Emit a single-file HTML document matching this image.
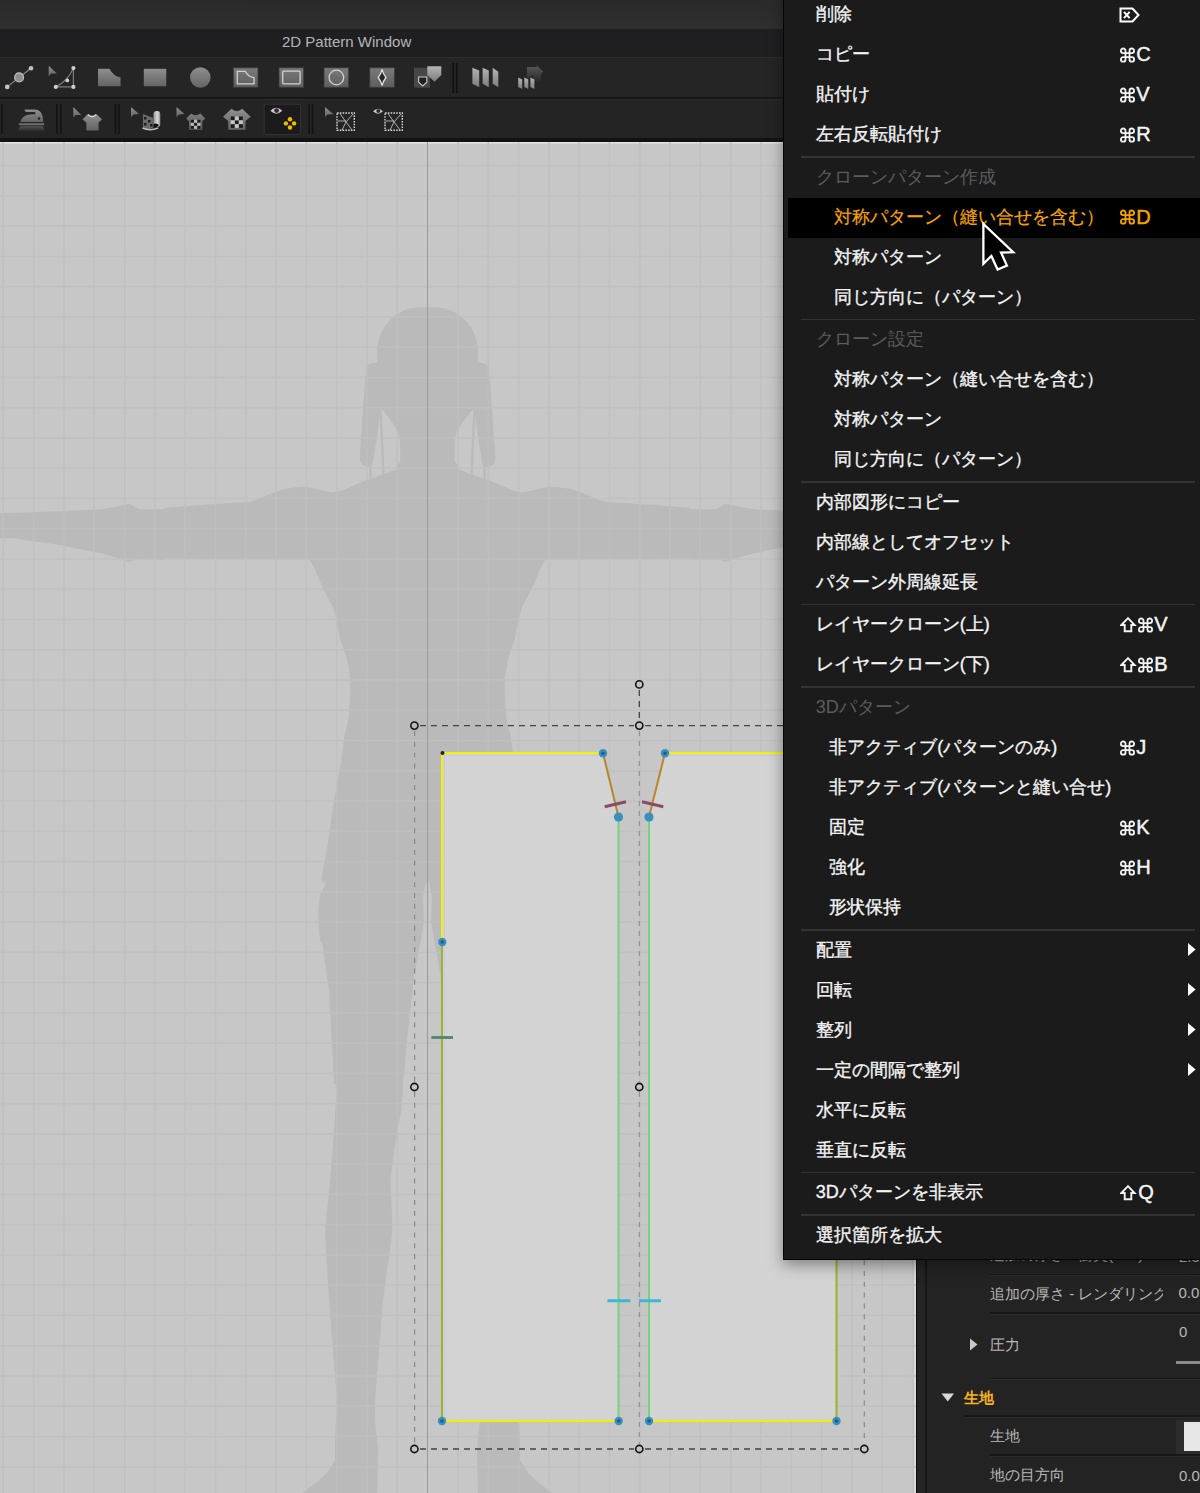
<!DOCTYPE html>
<html lang="ja"><head><meta charset="utf-8"><title>2D Pattern Window</title>
<style>
html,body{margin:0;padding:0;width:1200px;height:1493px;overflow:hidden;background:#c9c9c9;font-family:"Liberation Sans",sans-serif;}
.a{position:absolute}
#top{left:0;top:0;width:1200px;height:29px;background:linear-gradient(#2a2a2a,#2f2f2f)}
#title{left:0;top:29px;width:1200px;height:28px;background:#1f1f21;color:#b4b4b8;font-size:15px;line-height:28px;}
#title span{position:absolute;left:282px;top:-1px}
#tb1{left:0;top:57px;width:1200px;height:41px;background:#252525;border-top:1.5px solid #2e2e2e;box-sizing:border-box}
#tb1b{left:0;top:97px;width:1200px;height:1.5px;background:#171717}
#tb2{left:0;top:98.5px;width:1200px;height:40px;background:#242424;border-top:1.5px solid #2c2c2c;box-sizing:border-box}
#tb2b{left:0;top:138px;width:1200px;height:4px;background:#121212}
#canvas{left:0;top:142px;width:916px;height:1351px}
#strip{left:916px;top:142px;width:11px;height:1351px;background:#242424;border-left:1.5px solid #0c0c0c;border-right:2px solid #161616;box-sizing:border-box}
#panel{left:927px;top:142px;width:273px;height:1351px;background:#232323}
.pt{position:absolute;color:#b9b9b9;font-size:15px;line-height:20px;white-space:nowrap}
.psep{position:absolute;height:1.5px;background:#171717;border-bottom:1px solid #2b2b2b}
#menu{left:783px;top:-10px;width:420px;height:1268.8px;background:#1b1b1b;border-left:1px solid #050505;border-bottom:1px solid #050505;box-shadow:0 5px 14px rgba(0,0,0,0.38);}
#menuin{position:absolute;left:0;top:10px;width:100%;height:100%}
.mi,.mh{position:absolute;left:0;width:417px;height:40px;}
.mi .t,.mh .t{position:absolute;top:0;line-height:38px;font-size:18px;white-space:nowrap;color:#f4f4f4;-webkit-text-stroke:0.35px #f4f4f4}
.mh .t{-webkit-text-stroke:0}
.hl .t{-webkit-text-stroke:0.2px #f5a300}
.mh .t{color:#5c5c5c}
.hl{background:#000;left:4px;width:413px}
.hl .t{color:#f5a300;margin-left:-4px}
.sc{position:absolute;top:0;line-height:39px;font-size:20px;color:#f4f4f4;white-space:nowrap;-webkit-text-stroke:0.45px currentColor}
.sym{position:absolute;top:11.5px}
.delic{position:absolute;left:335px;top:12px}
.arr{position:absolute;left:404px;top:12px}
.sep{position:absolute;left:17.3px;width:394px;height:1.5px;background:#333333}
</style></head>
<body>
<div class="a" id="top"></div>
<div class="a" id="title"><span>2D Pattern Window</span></div>
<div class="a" id="tb1"></div>
<div class="a" id="tb1b"></div>
<div class="a" id="tb2"></div>
<div class="a" id="tb2b"></div>

<svg class="a" style="left:0;top:57px" width="783" height="85" viewBox="0 57 783 85">
 <defs>
  <linearGradient id="g1" x1="0" y1="0" x2="0" y2="1"><stop offset="0" stop-color="#8e8e8e"/><stop offset="1" stop-color="#646464"/></linearGradient>
  <linearGradient id="g2" x1="0" y1="0" x2="0" y2="1"><stop offset="0" stop-color="#7a7a7a"/><stop offset="1" stop-color="#5e5e5e"/></linearGradient>
  <linearGradient id="g3" x1="0" y1="0" x2="0" y2="1"><stop offset="0" stop-color="#b4b4b4"/><stop offset="1" stop-color="#7c7c7c"/></linearGradient>
  <linearGradient id="g4" x1="0" y1="0" x2="1" y2="0"><stop offset="0" stop-color="#9a9a9a"/><stop offset="0.6" stop-color="#d8d8d8"/><stop offset="1" stop-color="#8a8a8a"/></linearGradient>
  <linearGradient id="g5" x1="0" y1="0" x2="0" y2="1"><stop offset="0" stop-color="#5a5a5a"/><stop offset="1" stop-color="#242424"/></linearGradient>
 </defs>
 <!-- row1 -->
 <line x1="7.2" y1="86.9" x2="31" y2="68.3" stroke="#8a8a8a" stroke-width="1.2"/>
 <circle cx="7.2" cy="86.9" r="2.3" fill="#c4c4c4"/><circle cx="31" cy="68.3" r="2.3" fill="#c4c4c4"/>
 <circle cx="19.1" cy="77.4" r="4.4" fill="#8c8c8c" stroke="#bcbcbc" stroke-width="1.3"/>

 <path d="M48.7,65.8 L48.7,76.4 L51.3,73.6 L56.8,73.4 Z" fill="url(#g1)"/>
 <path d="M55.8,86.9 L73.4,86.9 L73.4,68.1 M55.8,86.9 Q68,81 73.4,68.1" stroke="#7c7c7c" fill="none" stroke-width="1.2"/>
 <g fill="#cfcfcf"><circle cx="55.8" cy="86.9" r="2.1"/><circle cx="73.4" cy="86.9" r="2.1"/><circle cx="73.4" cy="68.1" r="2.1"/><circle cx="67.3" cy="80.4" r="1.9"/></g>

 <path d="M98,68.8 H109.4 Q113.5,76.3 120.6,77.5 V86.3 H98 Z" fill="url(#g1)"/>
 <rect x="143.8" y="68.8" width="22.5" height="17.5" fill="url(#g1)"/>
 <circle cx="200.3" cy="77.5" r="10.3" fill="url(#g1)"/>

 <rect x="233.3" y="67.8" width="24.7" height="19.5" fill="url(#g2)" stroke="#3a3a3a" stroke-width="0.8"/>
 <path d="M237.3,71.3 H245.2 Q248.3,77 254,77.6 V83.8 H237.3 Z" fill="none" stroke="#d2d2d2" stroke-width="1.3"/>
 <rect x="279" y="67.8" width="24.7" height="19.5" fill="url(#g2)" stroke="#3a3a3a" stroke-width="0.8"/>
 <rect x="282.7" y="71.2" width="17.4" height="12.6" rx="1" fill="none" stroke="#d2d2d2" stroke-width="1.3"/>
 <rect x="324" y="67.8" width="24.7" height="19.5" fill="url(#g2)" stroke="#3a3a3a" stroke-width="0.8"/>
 <circle cx="336.4" cy="77.5" r="7.3" fill="none" stroke="#d2d2d2" stroke-width="1.3"/>
 <rect x="369.8" y="67.8" width="24.7" height="19.5" fill="url(#g2)" stroke="#3a3a3a" stroke-width="0.8"/>
 <path d="M382.1,69.3 Q383.2,74 386,77.5 Q383.2,81 382.1,85.7 Q381,81 378.2,77.5 Q381,74 382.1,69.3 Z" fill="#262626" stroke="#e0e0e0" stroke-width="1.3"/>

 <rect x="414" y="67.7" width="16" height="20" fill="#474747"/>
 <path d="M418.6,77 H426.8 V82.2 L422.7,86 L418.6,82.2 Z" fill="#222" stroke="#c8c8c8" stroke-width="1.1"/>
 <path d="M427.3,66.3 H441.3 V75 L434.5,81.7 L427.3,75 Z" fill="url(#g3)"/>

 <rect x="452.5" y="63" width="1.6" height="30" fill="#111"/><rect x="455.9" y="63" width="1.6" height="30" fill="#111"/>

 <path d="M472.4,67.8 L479.2,70.6 L479.2,87.3 L472.4,83.8 Z" fill="url(#g3)"/>
 <path d="M482.6,67.8 L488.8,70.6 L488.8,87.3 L482.6,83.8 Z" fill="url(#g3)"/>
 <path d="M492.7,67.8 L498.3,71.8 L498.3,87.3 L492.7,83.8 Z" fill="url(#g3)"/>

 <path d="M527,67 H536.5 V65.3 L543.4,71.5 L541,74 V82.7 H533 V74.5 L527,80 Z" fill="url(#g5)"/>
 <path d="M518.2,77.5 L522.2,79.5 L522.2,89 L518.2,87 Z M524.3,77.5 L528.3,79.5 L528.3,89 L524.3,87 Z M530.4,77.5 L534.4,79.5 L534.4,89 L530.4,87 Z" fill="url(#g3)"/>

 <!-- row2 -->
 <rect x="1" y="104" width="1.8" height="30" fill="#141414"/>
 <rect x="56" y="104" width="1.8" height="30" fill="#141414"/><rect x="60" y="104" width="1.8" height="30" fill="#141414"/>
 <rect x="114.6" y="104" width="1.8" height="30" fill="#141414"/><rect x="118.2" y="104" width="1.8" height="30" fill="#141414"/>
 <rect x="308.2" y="104" width="1.8" height="30" fill="#141414"/><rect x="311.6" y="104" width="1.8" height="30" fill="#141414"/>

 <!-- iron -->
 <path d="M24.6,109.6 H35 Q41,109.8 42.5,116 L43.3,122 H20.4 Q22,115.5 30,114.6 L35,114.3 Q36.5,112.3 34,112 H26.5 Q24.3,111.8 24.6,109.6 Z" fill="url(#g1)"/>
 <circle cx="39" cy="118.5" r="1.2" fill="#1e1e1e"/>
 <rect x="18.8" y="123.2" width="25.4" height="1.9" fill="#6e6e6e"/>
 <path d="M20.5,125.8 H42.5 L45.8,131.7 H17 Z" fill="url(#g5)" opacity="0.9"/>

 <!-- arrow+shirt -->
 <path d="M73.3,107 L73.3,117.5 L75.8,115 L81.3,115 Z" fill="url(#g1)"/>
 <path d="M87.5,114.2 Q92.1,119.5 96.7,114.2 L102,119.6 L98.6,122.6 V130.4 H86.4 V122.6 L82.5,119.6 Z" fill="url(#g1)"/>
 <path d="M88,114.5 Q92.1,118.8 96.2,114.5" fill="none" stroke="#d6d6d6" stroke-width="1.6"/>

 <!-- arrow + roll -->
 <path d="M131,107 L131,117.3 L133.5,114.6 L139,114 Z" fill="url(#g1)"/>
 <rect x="153.5" y="111" width="6.8" height="16" rx="3" fill="url(#g4)"/>
 <ellipse cx="155.5" cy="125.3" rx="3" ry="1.8" fill="#111"/>
 <path d="M143,114 L153.5,118 V127 Q149,131 143,128.5 Z" fill="#6a6a6a"/>
 <g fill="#1e1e1e"><rect x="144" y="117" width="2.5" height="2.5"/><rect x="148" y="120" width="2.5" height="2.5"/><rect x="144" y="123" width="2.5" height="2.5"/><rect x="150" y="124" width="2.5" height="2.5"/></g>
 <path d="M142.5,128 Q150,131.5 158,128" fill="none" stroke="#bdbdbd" stroke-width="1.4"/>

 <!-- arrow + shirt checker -->
 <path d="M176.5,107 L176.5,117.3 L179,114.6 L184.5,114 Z" fill="url(#g1)"/>
 <path d="M191,113.5 Q195.7,117 200.4,113.5 L205.2,118.5 L202.3,121.3 V129.8 H189.1 V121.3 L186.2,118.5 Z" fill="url(#g2)"/>
 <g fill="#1c1c1c"><rect x="190.8" y="119.8" width="3.2" height="3"/><rect x="197.2" y="119.8" width="3.2" height="3"/><rect x="194" y="122.8" width="3.2" height="3"/><rect x="190.8" y="125.8" width="3.2" height="3"/><rect x="197.2" y="125.8" width="3.2" height="3"/></g>
 <g fill="#b8b8b8"><rect x="194" y="119.8" width="3.2" height="3"/><rect x="190.8" y="122.8" width="3.2" height="3"/><rect x="197.2" y="122.8" width="3.2" height="3"/><rect x="194" y="125.8" width="3.2" height="3"/></g>

 <!-- shirt checker big -->
 <path d="M231.5,108.7 Q236.8,113.5 242.2,108.7 L250.7,116.8 L245.5,121 V129.8 H228.2 V121 L223,116.8 Z" fill="url(#g1)"/>
 <path d="M233.8,108.7 Q236.8,112 239.9,108.7 Z" fill="#1f1f1f"/>
 <g fill="#1c1c1c"><rect x="230.8" y="116.5" width="4" height="3.8"/><rect x="238.8" y="116.5" width="4" height="3.8"/><rect x="234.8" y="120.3" width="4" height="3.8"/><rect x="230.8" y="124.1" width="4" height="3.8"/><rect x="238.8" y="124.1" width="4" height="3.8"/></g>
 <g fill="#c4c4c4"><rect x="234.8" y="116.5" width="4" height="3.8"/><rect x="230.8" y="120.3" width="4" height="3.8"/><rect x="238.8" y="120.3" width="4" height="3.8"/><rect x="234.8" y="124.1" width="4" height="3.8"/></g>

 <!-- selected -->
 <rect x="264.2" y="104.2" width="36.4" height="30.4" rx="2" fill="#1b1b1b" stroke="#343434" stroke-width="1"/>
 <path d="M270.3,110.8 Q276.3,104.5 282.3,110.8 Q276.3,116.5 270.3,110.8 Z" fill="#c9c9c9"/>
 <circle cx="276.6" cy="110.6" r="2.4" fill="#3b2440"/>
 <g fill="#f2bb00"><circle cx="290" cy="119.3" r="2.2"/><circle cx="285.9" cy="123.4" r="2.2"/><circle cx="294.1" cy="123.4" r="2.2"/><circle cx="290" cy="127.5" r="2.2"/></g>

 <!-- arrow + grid box -->
 <path d="M325,107 L325,117 L327.5,114.4 L333.5,114.2 Z" fill="url(#g1)"/>
 <g fill="none" stroke="#d8d8d8" stroke-width="1.4" stroke-dasharray="1.6 1.2"><rect x="337" y="113" width="17.3" height="17.3"/></g>
 <path d="M340,113.5 L346,122 L353,114 M346,122 L342,130 M346,122 L352,130 M337.5,121 H346" fill="none" stroke="#bfbfbf" stroke-width="0.9"/>

 <!-- eye + grid box -->
 <path d="M373,111.3 Q378,106 383,111.3 Q378,116 373,111.3 Z" fill="#c9c9c9"/>
 <circle cx="378.3" cy="111.1" r="2" fill="#3b2440"/>
 <g fill="none" stroke="#d8d8d8" stroke-width="1.4" stroke-dasharray="1.6 1.2"><rect x="385" y="113" width="17.3" height="17.3"/></g>
 <path d="M388,113.5 L394,122 L401,114 M394,122 L390,130 M394,122 L400,130 M385.5,121 H394" fill="none" stroke="#bfbfbf" stroke-width="0.9"/>
</svg>


<svg class="a" id="canvas" width="916" height="1351" viewBox="0 142 916 1351">
 <rect x="0" y="142" width="916" height="1351" fill="#c7c7c7"/>
 <rect x="0" y="142" width="916" height="1.5" fill="#e2e2e2"/>
 <rect x="914.3" y="142" width="1.5" height="1351" fill="#dedede"/>
 <path d="M427.5,307.3 L420,307.4 L410.5,308.3 L402.5,311 L395.5,315.3 L389.3,320.8 L384.3,327 L380.6,334 L378.3,341 L377.3,348 L377,356 L377.2,362.3 L372,363.2 L368.5,364.5 L366,368 L365,381 L363,410 L361,440 L359.6,457 L360.5,462 L362.5,465 L365.5,466.5 L369,466.8 L369.3,481 L371.5,481 L371.8,466 L373,462 L377,437 L380,413 L381.3,409.5 L384.5,412 L388.8,417.8 L394,425 L398.6,433 L400.1,441.7 L400.2,461 L395.3,469.8 L380,475.5 L365,480.7 L350,487 L342.3,490.4 L332.5,492.6 L317.3,489.3 L306.5,486.5 L298,487 L283,489.3 L270,494 L258,499.3 L250,501.7 L200,505 L167,507.7 L163,509.3 L140,509.3 L137,508.3 L130,504 L100,509.5 L40,512 L-20,514 L-20,538 L13,538.3 L60,545 L100,553 L130,561.7 L137,559.3 L163,560 L167,558.3 L200,559 L250,559.3 L310,560 L316,572 L322,586 L328,598 L333,607 L337,622 L340.3,640 L347.3,660 L350.3,680 L350,700 L348.3,720 L344.3,736.5 L341.3,760.6 L333.9,800.8 L328.2,841 L321.2,881 L326,883.5 L320,895 L318.2,911 L318.5,925 L320,940 L322.2,943 L329,990 L334,1083 L337,1086 L335.3,1110 L334,1131 L330.2,1180 L325,1230 L329,1300 L337,1400 L335,1440 L335,1460 L329,1470 L320,1480 L300,1495 L377,1495 L378,1450 L375,1420 L375,1400 L383,1300 L392.6,1230 L390.5,1180 L397,1131 L401.4,1110 L403.7,1077 L406.7,1043 L410.3,1010 L414,978 L419,950 L424,922 L423,898 L425,886 L427.5,879.2 L430,886 L432,898 L431,922 L436,950 L441,978 L444.7,1010 L448.3,1043 L451.3,1077 L453.6,1110 L458,1131 L464.5,1180 L462.4,1230 L472,1300 L480,1400 L480,1420 L477,1450 L478,1495 L555,1495 L535,1480 L526,1470 L520,1460 L520,1440 L518,1400 L526,1300 L530,1230 L524.8,1180 L521,1131 L519.7,1110 L518,1086 L521,1083 L526,990 L532.8,943 L535,940 L536.5,925 L536.8,911 L535,895 L529,883.5 L533.8,881 L526.8,841 L521.1,800.8 L513.7,760.6 L510.7,736.5 L506.7,720 L505,700 L504.7,680 L507.7,660 L514.7,640 L518,622 L522,607 L527,598 L533,586 L539,572 L545,560 L605,559.3 L655,559 L688,558.3 L692,560 L718,559.3 L725,561.7 L755,553 L795,545 L842,538.3 L875,538 L875,514 L815,512 L755,509.5 L725,504 L718,508.3 L715,509.3 L692,509.3 L688,507.7 L655,505 L605,501.7 L597,499.3 L585,494 L572,489.3 L557,487 L548.5,486.5 L537.7,489.3 L522.5,492.6 L512.7,490.4 L505,487 L490,480.7 L475,475.5 L459.7,469.8 L454.8,461 L454.9,441.7 L456.4,433 L461,425 L466.2,417.8 L470.5,412 L473.7,409.5 L475,413 L478,437 L482,462 L483.2,466 L483.5,481 L485.7,481 L486,466.8 L489.5,466.5 L492.5,465 L494.5,462 L495.4,457 L494,440 L492,410 L490,381 L489,368 L486.5,364.5 L483,363.2 L477.8,362.3 L478,356 L477.7,348 L476.7,341 L474.4,334 L470.7,327 L465.7,320.8 L459.5,315.3 L452.5,311 L444.5,308.3 L435,307.4 L427.5,307.3 Z" fill="#bababa"/>
 <path d="M380.6,411 L383.6,476 M474.4,411 L471.4,476" stroke="#bababa" stroke-width="2.2" fill="none"/>
 <g fill="#c0c0c0" opacity="0.8"><rect x="2.55" y="142" width="1.5" height="1351"/><rect x="32.86" y="142" width="1.5" height="1351"/><rect x="63.17" y="142" width="1.5" height="1351"/><rect x="93.48" y="142" width="1.5" height="1351"/><rect x="123.79" y="142" width="1.5" height="1351"/><rect x="154.1" y="142" width="1.5" height="1351"/><rect x="184.41" y="142" width="1.5" height="1351"/><rect x="214.72" y="142" width="1.5" height="1351"/><rect x="245.03" y="142" width="1.5" height="1351"/><rect x="275.34" y="142" width="1.5" height="1351"/><rect x="305.65" y="142" width="1.5" height="1351"/><rect x="335.96" y="142" width="1.5" height="1351"/><rect x="366.27" y="142" width="1.5" height="1351"/><rect x="396.58" y="142" width="1.5" height="1351"/><rect x="426.89" y="142" width="1.5" height="1351"/><rect x="457.2" y="142" width="1.5" height="1351"/><rect x="487.51" y="142" width="1.5" height="1351"/><rect x="517.82" y="142" width="1.5" height="1351"/><rect x="548.13" y="142" width="1.5" height="1351"/><rect x="578.44" y="142" width="1.5" height="1351"/><rect x="608.75" y="142" width="1.5" height="1351"/><rect x="639.06" y="142" width="1.5" height="1351"/><rect x="669.37" y="142" width="1.5" height="1351"/><rect x="699.68" y="142" width="1.5" height="1351"/><rect x="729.99" y="142" width="1.5" height="1351"/><rect x="760.3" y="142" width="1.5" height="1351"/><rect x="790.61" y="142" width="1.5" height="1351"/><rect x="820.92" y="142" width="1.5" height="1351"/><rect x="851.23" y="142" width="1.5" height="1351"/><rect x="881.54" y="142" width="1.5" height="1351"/><rect x="911.85" y="142" width="1.5" height="1351"/><rect x="0" y="164.85" width="916" height="1.5"/><rect x="0" y="195.11" width="916" height="1.5"/><rect x="0" y="225.37" width="916" height="1.5"/><rect x="0" y="255.63" width="916" height="1.5"/><rect x="0" y="285.89" width="916" height="1.5"/><rect x="0" y="316.15" width="916" height="1.5"/><rect x="0" y="346.41" width="916" height="1.5"/><rect x="0" y="376.67" width="916" height="1.5"/><rect x="0" y="406.93" width="916" height="1.5"/><rect x="0" y="437.19" width="916" height="1.5"/><rect x="0" y="467.45" width="916" height="1.5"/><rect x="0" y="497.71" width="916" height="1.5"/><rect x="0" y="527.97" width="916" height="1.5"/><rect x="0" y="558.23" width="916" height="1.5"/><rect x="0" y="588.49" width="916" height="1.5"/><rect x="0" y="618.75" width="916" height="1.5"/><rect x="0" y="649.01" width="916" height="1.5"/><rect x="0" y="679.27" width="916" height="1.5"/><rect x="0" y="709.53" width="916" height="1.5"/><rect x="0" y="739.79" width="916" height="1.5"/><rect x="0" y="770.05" width="916" height="1.5"/><rect x="0" y="800.31" width="916" height="1.5"/><rect x="0" y="830.57" width="916" height="1.5"/><rect x="0" y="860.83" width="916" height="1.5"/><rect x="0" y="891.09" width="916" height="1.5"/><rect x="0" y="921.35" width="916" height="1.5"/><rect x="0" y="951.61" width="916" height="1.5"/><rect x="0" y="981.87" width="916" height="1.5"/><rect x="0" y="1012.13" width="916" height="1.5"/><rect x="0" y="1042.39" width="916" height="1.5"/><rect x="0" y="1072.65" width="916" height="1.5"/><rect x="0" y="1102.91" width="916" height="1.5"/><rect x="0" y="1133.17" width="916" height="1.5"/><rect x="0" y="1163.43" width="916" height="1.5"/><rect x="0" y="1193.69" width="916" height="1.5"/><rect x="0" y="1223.95" width="916" height="1.5"/><rect x="0" y="1254.21" width="916" height="1.5"/><rect x="0" y="1284.47" width="916" height="1.5"/><rect x="0" y="1314.73" width="916" height="1.5"/><rect x="0" y="1344.99" width="916" height="1.5"/><rect x="0" y="1375.25" width="916" height="1.5"/><rect x="0" y="1405.51" width="916" height="1.5"/><rect x="0" y="1435.77" width="916" height="1.5"/><rect x="0" y="1466.03" width="916" height="1.5"/></g>
 <rect x="427" y="142" width="1" height="1351" fill="#9c9c9c"/>
 <!-- pattern pieces -->
 <path d="M442,753 L603,753 L618.5,817 L618.5,1421 L442,1421 Z" fill="#d3d3d3"/>
 <path d="M665,753 L836.5,753 L836.5,1421 L649,1421 L649,817 Z" fill="#d3d3d3"/>
 <!-- inner lavender hairlines -->
 <g fill="none" stroke="#c8c8e0" stroke-width="1">
  <path d="M444,755.5 L600,755.5 M667,755.5 L834,755.5"/>
  <path d="M444.5,755 L444.5,1419"/>
 </g>
 <!-- outline -->
 <g fill="none" stroke-width="2" stroke-linecap="butt">
  <path d="M442,753 L603,753" stroke="#f2f200"/>
  <path d="M665,753 L840,753" stroke="#f2f200"/>
  <path d="M442,753 L442,942" stroke="#f2f200"/>
  <path d="M442,942 L442,1421" stroke="#98b428"/>
  <path d="M836.5,753 L836.5,1421" stroke="#98b428"/>
  <path d="M442,1421 L618.5,1421 M649,1421 L836.5,1421" stroke="#f2f200"/>
  <path d="M603,753 L618.5,817 M665,753 L649,817" stroke="#b8862a"/>
  <path d="M618.5,817 L618.5,1421 M649,817 L649,1421" stroke="#74d27e"/>
 </g>
 <!-- notches -->
 <g stroke-width="3" fill="none">
  <path d="M604.7,806.7 L626,801.7 M642,801.7 L663.3,806.7" stroke="#8a4a6a"/>
  <path d="M607.4,1300.8 L630.4,1300.8 M639,1300.8 L661,1300.8" stroke="#3fb6d8"/>
  <path d="M431.3,1037.5 L453,1037.5" stroke="#5a8870"/>
 </g>
 <!-- bbox dashed -->
 <g fill="none" stroke="#444" stroke-width="1.3" stroke-dasharray="6 5">
  <path d="M420,725.6 L634,725.6 M645,725.6 L916,725.6"/>
  <path d="M420,1449 L634,1449 M645,1449 L859,1449"/>
  <path d="M639.3,690 L639.3,721"/>
 </g>
 <g fill="none" stroke="#888888" stroke-width="1.2" stroke-dasharray="5 5.8">
  <path d="M414.6,731 L414.6,1082 M414.6,1092 L414.6,1444"/>
  <path d="M864.3,731 L864.3,1444"/>
 </g>
 <g fill="none" stroke="#8a8a8a" stroke-width="1" stroke-dasharray="5 5">
  <path d="M639.3,731 L639.3,1082 M639.3,1092 L639.3,1444"/>
 </g>
 <!-- handles -->
 <g fill="none" stroke="#111" stroke-width="1.6">
  <circle cx="414.4" cy="725.6" r="3.6"/><circle cx="639.3" cy="725.6" r="3.6"/><circle cx="639.3" cy="684.4" r="3.6"/>
  <circle cx="414.4" cy="1087" r="3.6"/><circle cx="639.3" cy="1087" r="3.6"/>
  <circle cx="414.4" cy="1449" r="3.6"/><circle cx="639.3" cy="1449" r="3.6"/><circle cx="864.3" cy="1449" r="3.6"/>
 </g>
 <!-- points -->
 <g>
  <circle cx="442.5" cy="753" r="2" fill="#222"/>
  <g fill="#3b8fbf"><circle cx="603" cy="753.3" r="4.2"/><circle cx="665" cy="753.3" r="4.2"/><circle cx="618.5" cy="817" r="4.6"/><circle cx="649" cy="817" r="4.6"/>
  <circle cx="442.3" cy="942" r="4.2"/><circle cx="442" cy="1421" r="4.2"/><circle cx="618.7" cy="1421" r="4.2"/><circle cx="649" cy="1421" r="4.2"/><circle cx="836.5" cy="1421" r="4.2"/></g>
  <g fill="#1f5f84"><circle cx="603" cy="753.3" r="1.8"/><circle cx="665" cy="753.3" r="1.8"/><circle cx="442.3" cy="942" r="1.8"/><circle cx="442" cy="1421" r="1.8"/><circle cx="618.7" cy="1421" r="1.8"/><circle cx="649" cy="1421" r="1.8"/><circle cx="836.5" cy="1421" r="1.8"/></g>
 </g>
</svg>

<div class="a" id="strip"></div>
<div class="a" id="panel"></div>
<div class="pt" style="left:990px;top:1245px">追加の厚さ - 衝突(mm)</div>
<div class="pt" style="left:1179px;top:1247px">2.5</div>
<div class="psep" style="left:990px;top:1273.5px;width:210px"></div>
<div class="pt" style="left:990px;top:1283.5px;width:173px;overflow:hidden">追加の厚さ - レンダリング</div>
<div class="pt" style="left:1178.5px;top:1283px">0.0</div>
<div class="psep" style="left:990px;top:1312px;width:210px"></div>
<svg class="a" style="left:969px;top:1338px" width="10" height="13"><path d="M1,0.5 L8.5,6.5 L1,12.5 Z" fill="#c9c9c9"/></svg>
<div class="pt" style="left:990px;top:1335px">圧力</div>
<div class="pt" style="left:1179px;top:1322px">0</div>
<div class="a" style="left:1176px;top:1361px;width:24px;height:3px;background:#8a8a8a"></div>
<div class="psep" style="left:990px;top:1377.5px;width:210px"></div>
<svg class="a" style="left:941px;top:1393px" width="14" height="10"><path d="M0.5,0.5 L13,0.5 L6.75,8.5 Z" fill="#d8d8d8"/></svg>
<div class="pt" style="left:964px;top:1387.5px;color:#f2b31c;font-weight:bold">生地</div>
<div class="psep" style="left:964px;top:1415px;width:236px"></div>
<div class="pt" style="left:990px;top:1426px">生地</div>
<div class="a" style="left:1176px;top:1420px;width:24px;height:34px;background:#2c2c2c"></div>
<div class="a" style="left:1184px;top:1422px;width:16px;height:29px;background:#e6e6e6"></div>
<div class="psep" style="left:990px;top:1454px;width:210px"></div>
<div class="pt" style="left:990px;top:1465px">地の目方向</div>
<div class="pt" style="left:1179px;top:1466px">0.0</div>

<div class="a" id="menu"><div id="menuin"><div class="mi" style="top:-5px"><span class="t" style="left:31.7px">削除</span><svg class="delic" width="22" height="16" viewBox="0 0 22 16"><path d="M1.5 1.5 H13.5 L19.5 8 L13.5 14.5 H1.5 Z" fill="none" stroke="#fff" stroke-width="2" stroke-linejoin="miter"/><path d="M5 4.8 L10.6 11.2 M10.6 4.8 L5 11.2" stroke="#fff" stroke-width="2"/></svg></div><div class="mi" style="top:35px"><span class="t" style="left:31.7px">コピー</span><svg class="sym" style="left:336.3px" width="16" height="17" viewBox="0 0 16 17"><path transform="translate(0.2,0.8)" d="M5.3,5.3 H11.6 A2.3,2.3 0 1 0 9.3,3 V11.6 A2.3,2.3 0 1 0 11.6,9.3 H3 A2.3,2.3 0 1 0 5.3,11.6 V3 A2.3,2.3 0 1 0 3,5.3 Z" fill="none" stroke="#f4f4f4" stroke-width="1.8"/></svg><span class="sc" style="left:352.2px;color:#f4f4f4">C</span></div><div class="mi" style="top:75px"><span class="t" style="left:31.7px">貼付け</span><svg class="sym" style="left:336.3px" width="16" height="17" viewBox="0 0 16 17"><path transform="translate(0.2,0.8)" d="M5.3,5.3 H11.6 A2.3,2.3 0 1 0 9.3,3 V11.6 A2.3,2.3 0 1 0 11.6,9.3 H3 A2.3,2.3 0 1 0 5.3,11.6 V3 A2.3,2.3 0 1 0 3,5.3 Z" fill="none" stroke="#f4f4f4" stroke-width="1.8"/></svg><span class="sc" style="left:352.2px;color:#f4f4f4">V</span></div><div class="mi" style="top:115px"><span class="t" style="left:31.7px">左右反転貼付け</span><svg class="sym" style="left:336.3px" width="16" height="17" viewBox="0 0 16 17"><path transform="translate(0.2,0.8)" d="M5.3,5.3 H11.6 A2.3,2.3 0 1 0 9.3,3 V11.6 A2.3,2.3 0 1 0 11.6,9.3 H3 A2.3,2.3 0 1 0 5.3,11.6 V3 A2.3,2.3 0 1 0 3,5.3 Z" fill="none" stroke="#f4f4f4" stroke-width="1.8"/></svg><span class="sc" style="left:352.2px;color:#f4f4f4">R</span></div><div class="sep" style="top:156px"></div><div class="mh" style="top:157.6px"><span class="t" style="left:31.7px">クローンパターン作成</span></div><div class="mi hl" style="top:197.6px"><span class="t" style="left:50.2px">対称パターン（縫い合せを含む）</span><svg class="sym" style="left:332.3px" width="16" height="17" viewBox="0 0 16 17"><path transform="translate(0.2,0.8)" d="M5.3,5.3 H11.6 A2.3,2.3 0 1 0 9.3,3 V11.6 A2.3,2.3 0 1 0 11.6,9.3 H3 A2.3,2.3 0 1 0 5.3,11.6 V3 A2.3,2.3 0 1 0 3,5.3 Z" fill="none" stroke="#f5a300" stroke-width="1.8"/></svg><span class="sc" style="left:348.2px;color:#f5a300">D</span></div><div class="mi" style="top:237.6px"><span class="t" style="left:50.2px">対称パターン</span></div><div class="mi" style="top:277.6px"><span class="t" style="left:50.2px">同じ方向に（パターン）</span></div><div class="sep" style="top:318.6px"></div><div class="mh" style="top:320.2px"><span class="t" style="left:31.7px">クローン設定</span></div><div class="mi" style="top:360.2px"><span class="t" style="left:50.2px">対称パターン（縫い合せを含む）</span></div><div class="mi" style="top:400.2px"><span class="t" style="left:50.2px">対称パターン</span></div><div class="mi" style="top:440.2px"><span class="t" style="left:50.2px">同じ方向に（パターン）</span></div><div class="sep" style="top:481.2px"></div><div class="mi" style="top:482.8px"><span class="t" style="left:31.7px">内部図形にコピー</span></div><div class="mi" style="top:522.8px"><span class="t" style="left:31.7px">内部線としてオフセット</span></div><div class="mi" style="top:562.8px"><span class="t" style="left:31.7px">パターン外周線延長</span></div><div class="sep" style="top:603.8px"></div><div class="mi" style="top:605.4px"><span class="t" style="left:31.7px">レイヤークローン(上)</span><svg class="sym" style="left:336px" width="17" height="17" viewBox="0 0 17 17"><path d="M8,1.2 L14.6,8 L11.3,8 L11.3,14.3 L4.7,14.3 L4.7,8 L1.4,8 Z" fill="none" stroke="#f4f4f4" stroke-width="1.9" stroke-linejoin="miter"/></svg><svg class="sym" style="left:354.3px" width="16" height="17" viewBox="0 0 16 17"><path transform="translate(0.2,0.8)" d="M5.3,5.3 H11.6 A2.3,2.3 0 1 0 9.3,3 V11.6 A2.3,2.3 0 1 0 11.6,9.3 H3 A2.3,2.3 0 1 0 5.3,11.6 V3 A2.3,2.3 0 1 0 3,5.3 Z" fill="none" stroke="#f4f4f4" stroke-width="1.8"/></svg><span class="sc" style="left:370.2px;color:#f4f4f4">V</span></div><div class="mi" style="top:645.4px"><span class="t" style="left:31.7px">レイヤークローン(下)</span><svg class="sym" style="left:336px" width="17" height="17" viewBox="0 0 17 17"><path d="M8,1.2 L14.6,8 L11.3,8 L11.3,14.3 L4.7,14.3 L4.7,8 L1.4,8 Z" fill="none" stroke="#f4f4f4" stroke-width="1.9" stroke-linejoin="miter"/></svg><svg class="sym" style="left:354.3px" width="16" height="17" viewBox="0 0 16 17"><path transform="translate(0.2,0.8)" d="M5.3,5.3 H11.6 A2.3,2.3 0 1 0 9.3,3 V11.6 A2.3,2.3 0 1 0 11.6,9.3 H3 A2.3,2.3 0 1 0 5.3,11.6 V3 A2.3,2.3 0 1 0 3,5.3 Z" fill="none" stroke="#f4f4f4" stroke-width="1.8"/></svg><span class="sc" style="left:370.2px;color:#f4f4f4">B</span></div><div class="sep" style="top:686.4px"></div><div class="mh" style="top:688px"><span class="t" style="left:31.7px">3Dパターン</span></div><div class="mi" style="top:728px"><span class="t" style="left:45.2px">非アクティブ(パターンのみ)</span><svg class="sym" style="left:336.3px" width="16" height="17" viewBox="0 0 16 17"><path transform="translate(0.2,0.8)" d="M5.3,5.3 H11.6 A2.3,2.3 0 1 0 9.3,3 V11.6 A2.3,2.3 0 1 0 11.6,9.3 H3 A2.3,2.3 0 1 0 5.3,11.6 V3 A2.3,2.3 0 1 0 3,5.3 Z" fill="none" stroke="#f4f4f4" stroke-width="1.8"/></svg><span class="sc" style="left:352.2px;color:#f4f4f4">J</span></div><div class="mi" style="top:768px"><span class="t" style="left:45.2px">非アクティブ(パターンと縫い合せ)</span></div><div class="mi" style="top:808px"><span class="t" style="left:45.2px">固定</span><svg class="sym" style="left:336.3px" width="16" height="17" viewBox="0 0 16 17"><path transform="translate(0.2,0.8)" d="M5.3,5.3 H11.6 A2.3,2.3 0 1 0 9.3,3 V11.6 A2.3,2.3 0 1 0 11.6,9.3 H3 A2.3,2.3 0 1 0 5.3,11.6 V3 A2.3,2.3 0 1 0 3,5.3 Z" fill="none" stroke="#f4f4f4" stroke-width="1.8"/></svg><span class="sc" style="left:352.2px;color:#f4f4f4">K</span></div><div class="mi" style="top:848px"><span class="t" style="left:45.2px">強化</span><svg class="sym" style="left:336.3px" width="16" height="17" viewBox="0 0 16 17"><path transform="translate(0.2,0.8)" d="M5.3,5.3 H11.6 A2.3,2.3 0 1 0 9.3,3 V11.6 A2.3,2.3 0 1 0 11.6,9.3 H3 A2.3,2.3 0 1 0 5.3,11.6 V3 A2.3,2.3 0 1 0 3,5.3 Z" fill="none" stroke="#f4f4f4" stroke-width="1.8"/></svg><span class="sc" style="left:352.2px;color:#f4f4f4">H</span></div><div class="mi" style="top:888px"><span class="t" style="left:45.2px">形状保持</span></div><div class="sep" style="top:929px"></div><div class="mi" style="top:930.6px"><span class="t" style="left:31.7px">配置</span><svg class="arr" width="9" height="14" viewBox="0 0 9 14"><path d="M0 0 L7.6 6.5 L0 13 Z" fill="#fff"/></svg></div><div class="mi" style="top:970.6px"><span class="t" style="left:31.7px">回転</span><svg class="arr" width="9" height="14" viewBox="0 0 9 14"><path d="M0 0 L7.6 6.5 L0 13 Z" fill="#fff"/></svg></div><div class="mi" style="top:1010.6px"><span class="t" style="left:31.7px">整列</span><svg class="arr" width="9" height="14" viewBox="0 0 9 14"><path d="M0 0 L7.6 6.5 L0 13 Z" fill="#fff"/></svg></div><div class="mi" style="top:1050.6px"><span class="t" style="left:31.7px">一定の間隔で整列</span><svg class="arr" width="9" height="14" viewBox="0 0 9 14"><path d="M0 0 L7.6 6.5 L0 13 Z" fill="#fff"/></svg></div><div class="mi" style="top:1090.6px"><span class="t" style="left:31.7px">水平に反転</span></div><div class="mi" style="top:1130.6px"><span class="t" style="left:31.7px">垂直に反転</span></div><div class="sep" style="top:1171.6px"></div><div class="mi" style="top:1173.2px"><span class="t" style="left:31.7px">3Dパターンを非表示</span><svg class="sym" style="left:336px" width="17" height="17" viewBox="0 0 17 17"><path d="M8,1.2 L14.6,8 L11.3,8 L11.3,14.3 L4.7,14.3 L4.7,8 L1.4,8 Z" fill="none" stroke="#f4f4f4" stroke-width="1.9" stroke-linejoin="miter"/></svg><span class="sc" style="left:354.3px;color:#f4f4f4">Q</span></div><div class="sep" style="top:1214.2px"></div><div class="mi" style="top:1215.8px"><span class="t" style="left:31.7px">選択箇所を拡大</span></div></div></div>

<svg class="a" style="left:975px;top:215px" width="45" height="62" viewBox="975 215 45 62">
 <path d="M983.37,224.02 L983.37,263.73 L991.37,255.92 L997.60,269.59 L1006.90,265.59 L1001.04,252.57 L1013.13,252.20 Z" fill="#000" stroke="#fff" stroke-width="2.3" stroke-linejoin="miter"/>
</svg>
</body></html>
